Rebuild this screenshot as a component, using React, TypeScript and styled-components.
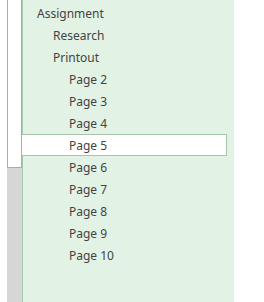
import React from 'react';
import styled, { createGlobalStyle } from 'styled-components';

const GlobalStyle = createGlobalStyle`
  html, body {
    margin: 0;
    padding: 0;
    background: #ffffff;
  }
`;

const Layout = styled.div`
  display: flex;
  flex-direction: row;
  height: 302px;
  width: 264px;
  overflow: hidden;
`;

const ScrollTrack = styled.div`
  margin-left: 7px;
  width: 15px;
  height: 100%;
  background: #d6d6d6;
  display: flex;
  flex-direction: column;
`;

const ScrollThumb = styled.div`
  box-sizing: border-box;
  height: 168px;
  background: #ffffff;
  border: 1px solid #ababab;
  border-top: none;
`;

const Panel = styled.div`
  box-sizing: border-box;
  width: 212px;
  height: 100%;
  background: #e2f2e4;
  border-left: 1px solid #a3ccac;
  padding-top: 2px;
  display: flex;
  flex-direction: column;
`;

const Row = styled.div<{ level: number; selected?: boolean }>`
  box-sizing: border-box;
  height: 22px;
  display: flex;
  align-items: center;
  padding-left: ${({ level }) => 14 + level * 16}px;
  font-family: 'Noto Sans', 'Liberation Sans', sans-serif;
  font-size: 12px;
  color: #444444;
  white-space: nowrap;
  ${({ selected }) =>
    selected &&
    `
    background: #ffffff;
    margin-left: -1px;
    padding-left: 47px;
    width: 205px;
    border: 1px solid #a6c4a8;
    border-left: none;
  `}
`;

type Item = { label: string; level: number; selected?: boolean };

const items: Item[] = [
  { label: 'Assignment', level: 0 },
  { label: 'Research', level: 1 },
  { label: 'Printout', level: 1 },
  { label: 'Page 2', level: 2 },
  { label: 'Page 3', level: 2 },
  { label: 'Page 4', level: 2 },
  { label: 'Page 5', level: 2, selected: true },
  { label: 'Page 6', level: 2 },
  { label: 'Page 7', level: 2 },
  { label: 'Page 8', level: 2 },
  { label: 'Page 9', level: 2 },
  { label: 'Page 10', level: 2 }
];

export default function App() {
  return (
    <>
      <GlobalStyle />
      <Layout>
        <ScrollTrack>
          <ScrollThumb />
        </ScrollTrack>
        <Panel>
          {items.map((item) => (
            <Row key={item.label} level={item.level} selected={item.selected}>
              {item.label}
            </Row>
          ))}
        </Panel>
      </Layout>
    </>
  );
}
